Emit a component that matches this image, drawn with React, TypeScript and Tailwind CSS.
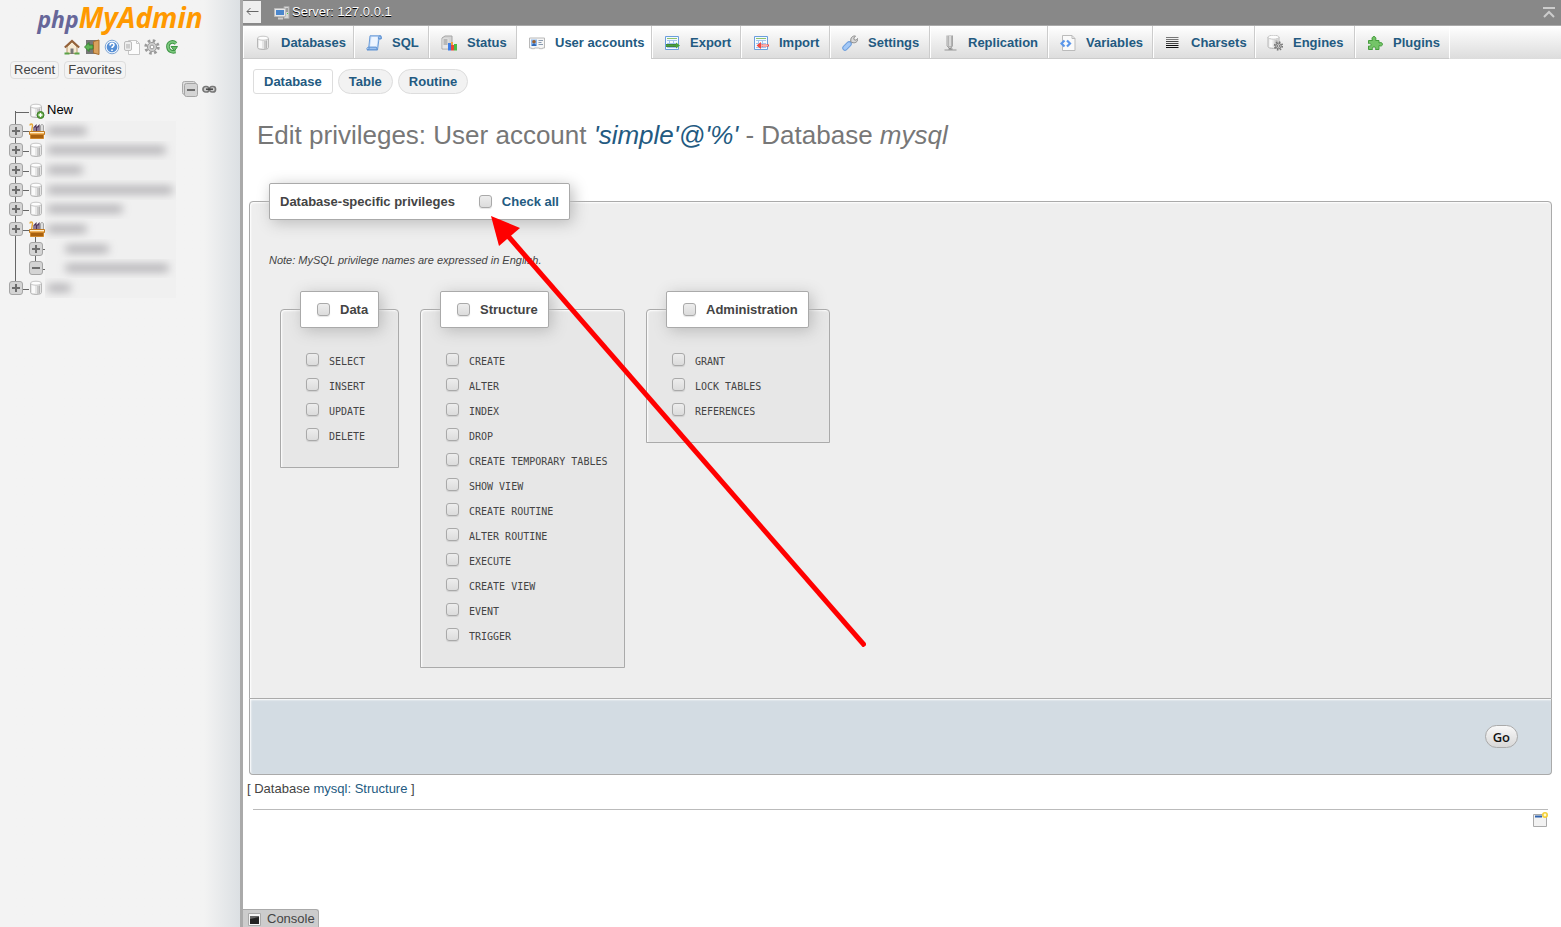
import type { ReactNode } from "react";

function Icon({ children, className = "" }: { children: ReactNode; className?: string }) {
  return (
    <svg aria-hidden="true" viewBox="0 0 16 16" className={`h-4 w-4 shrink-0 ${className}`}>
      {children}
    </svg>
  );
}

function Cylinder() {
  return (
    <>
      <path d="M2.500 3v9.500c0 1.300 2.400 2 5.500 2s5.500-.7 5.500-2V3z" fill="#e6e6e6" />
      <path d="M4 5v8h3V5z" fill="#fafafa" />
      <path d="M9 6v8h2.500V6z" fill="#c9c9c9" />
      <path d="M11.500 5.500v8" stroke="#b4b4b4" />
      <path d="M2.500 3v9.500c0 1.300 2.400 2 5.500 2s5.500-.7 5.500-2V3" fill="none" stroke="#b8b8b8" />
      <ellipse cx="8" cy="3.200" rx="5.500" ry="2" fill="#fdfdfd" stroke="#c6c6c6" />
    </>
  );
}

function Gear({ x, y, r, color }: { x: number; y: number; r: number; color: string }) {
  return (
    <g fill="none" stroke={color}>
      <circle cx={x} cy={y} r={r} strokeWidth={r * 0.45} strokeDasharray={`${r * 0.4} ${r * 0.385}`} />
      <circle cx={x} cy={y} r={r * 0.72} fill="#cfcfcf" strokeWidth="1" />
      <circle cx={x} cy={y} r={r * 0.3} fill="#fff" strokeWidth="1" />
    </g>
  );
}

const DbIcon = () => <Icon><Cylinder /></Icon>;

const SqlIcon = () => (
  <Icon>
    <path d="M4 .8h11l.3 3H13l-1.500 11H1.200c-1-1.500 0-2.500 1.600-2.700z" fill="#c3dbf8" stroke="#6a9bd8" />
    <path d="M5.500 2H12l-1.500 10H4z" fill="#eef5ff" />
    <path d="M12.500 3.800c-.5-1.800.5-3 1.500-2.800s1.500 1.500 1 2.800zM1.200 14.800c2 0 2-1.500 1.600-2.700h7.500c.5 1 .3 2 1.200 2.700z" fill="#9dc2f0" stroke="#5b8fd0" />
  </Icon>
);

const StatusIcon = () => (
  <Icon>
    <path d="M1 3l3-2h7v11l-2.500 2H1z" fill="#d4d4d4" stroke="#a5a5a5" />
    <path d="M1.500 3.500h6v10h-6z" fill="#e6e6e6" />
    <path d="M2.500 5h4M2.500 7h4M2.500 9h4" stroke="#8a8a8a" />
    <path d="M7 8h3v7.500H7z" fill="#3f7fe6" />
    <path d="M10 10h3v5.500h-3z" fill="#e84637" />
    <path d="M10 7h2v3h-2z" fill="#f5a13b" />
    <path d="M13 9h3v6.500h-3z" fill="#4cb944" />
  </Icon>
);

const UsersIcon = () => (
  <Icon>
    <path d="M.5 3h15v10h-2v.7h-3V13h-5v.7h-3V13h-2z" fill="#f6f6f6" stroke="#b9b9b9" />
    <path d="M2 4.500h6v6.500H2z" fill="#8bb8ef" />
    <circle cx="5" cy="6.700" r="1.800" fill="#9a5f2e" />
    <path d="M2.800 11c0-3.400 4.400-3.400 4.400 0z" fill="#2f67b5" />
    <path d="M9.500 5.500H14M9.500 7.500h3M9.500 9.500H14" stroke="#8a9bb0" />
  </Icon>
);

function TableGlyph() {
  return (
    <>
      <path d="M1.500 1.500h13v13h-13z" fill="#f4f9ff" stroke="#6b9fdd" />
      <path d="M3 3.500h10" stroke="#8fc46b" />
      <path d="M3 5.500h10M3 8.500h10M3 12.500h10M5.500 5v7M9.500 5v7" stroke="#a4c4ec" />
    </>
  );
}

const ExportIcon = () => (
  <Icon>
    <TableGlyph />
    <path d="M2 9.500h10V7.500l4 3-4 3v-2H2z" fill="#4aa33c" />
    <path d="M2 11.500h10M2 9.500h10" stroke="#2b7421" strokeWidth=".8" />
  </Icon>
);

const ImportIcon = () => (
  <Icon>
    <TableGlyph />
    <path d="M16 9.500H8V7l-4.500 3.500L8 14v-2.500h8z" fill="#f24b42" />
    <path d="M8 10.500h7" stroke="#ffb0aa" />
  </Icon>
);

const SettingsIcon = () => (
  <Icon>
    <path d="M7 9l3.500-3.500" stroke="#999" strokeWidth="3" />
    <path d="M9 6.500C8 3 10.500.5 13.500 1L11.800 3l.4 1.800 1.800.4L15.800 3.500C16 7 13 8.500 10 7.500z" fill="#d8d8d8" stroke="#8c8c8c" />
    <path d="M3 13l4-4" stroke="#6f9fdd" strokeWidth="5.500" strokeLinecap="round" />
    <path d="M3 13l4-4" stroke="#a3c8f6" strokeWidth="3.500" strokeLinecap="round" />
  </Icon>
);

const ReplicationIcon = () => (
  <Icon>
    <path d="M5 .5v10.500l3 3 2.500-3V.5" fill="#ddd" stroke="#a5a5a5" />
    <path d="M7 .5v12M9 .5v12" stroke="#8a8a8a" />
    <path d="M8 1v10" stroke="#fff" />
    <path d="M2.500 15h12" stroke="#b0b0b0" strokeWidth="1.500" />
    <path d="M6.500 14h4" stroke="#777" />
  </Icon>
);

const VariablesIcon = () => (
  <Icon>
    <path d="M2.500.5h9.500l3 3v12h-12.500z" fill="#fafafa" stroke="#bbb" />
    <path d="M12 .5v3h3" fill="none" stroke="#bbb" />
    <path d="M4.500 5.500L1.500 8.500l3 3M7 5.500l3 3-3 3" fill="none" stroke="#5a96ea" strokeWidth="2.200" />
  </Icon>
);

const CharsetsIcon = () => (
  <Icon>
    <path d="M1 2.500h12.500M1 4.500h12.500" stroke="#777" />
    <path d="M1 6.500h12.500M1 8.500h12.500" stroke="#444" />
    <path d="M1 10.500h12.500M1 12.500h12.500" stroke="#111" />
  </Icon>
);

const EnginesIcon = () => (
  <Icon>
    <g transform="translate(-1.500 -1)"><Cylinder /></g>
    <Gear x={11.5} y={11} r={3.8} color="#777" />
  </Icon>
);

const PluginsIcon = () => (
  <Icon>
    <path d="M1.500 5.500h4c-1.300-2 0-4 1.500-4s2.600 2 1.500 4H12v2.500c1.500-1 3.500-.3 3.500 1.300s-2 2.200-3.500 1.200v4H8.500c.6-2-.2-2.500-1.500-2.500s-2.100.5-1.500 2.500h-4V11c2 .4 2.500-.3 2.500-1.300S3.500 8.100 1.500 8.500z" fill="#74c468" stroke="#459c3c" />
  </Icon>
);

const tabs = [
  { label: "Databases", icon: <DbIcon />, width: "w-[111px]" },
  { label: "SQL", icon: <SqlIcon />, width: "w-[75px]" },
  { label: "Status", icon: <StatusIcon />, width: "w-[88px]" },
  { label: "User accounts", icon: <UsersIcon />, width: "w-[135px]", active: true },
  { label: "Export", icon: <ExportIcon />, width: "w-[89px]" },
  { label: "Import", icon: <ImportIcon />, width: "w-[89px]" },
  { label: "Settings", icon: <SettingsIcon />, width: "w-[100px]" },
  { label: "Replication", icon: <ReplicationIcon />, width: "w-[118px]" },
  { label: "Variables", icon: <VariablesIcon />, width: "w-[105px]" },
  { label: "Charsets", icon: <CharsetsIcon />, width: "w-[102px]" },
  { label: "Engines", icon: <EnginesIcon />, width: "w-[100px]" },
  { label: "Plugins", icon: <PluginsIcon />, width: "w-[95px]" },
];

const boxClass =
  "h-[13px] w-[13px] shrink-0 appearance-none rounded-[3px] border border-[#a9a9a9] bg-linear-to-b from-[#ededed] to-[#dcdcdc] shadow-[0_1px_1px_rgba(0,0,0,0.1)] checked:bg-[#235a81] checked:bg-none";

const legendClass =
  "flex h-[37px] items-center rounded-[2px] border border-[#aaa] bg-white font-bold text-[#444] shadow-[3px_3px_15px_#bbb]";

function PrivilegeGroup({ title, items, width }: { title: string; items: string[]; width: string }) {
  return (
    <fieldset className={`${width} min-w-0 rounded-t-[4px] border border-[#aaa] bg-[#e7e7e7] px-[19px] pb-3.5 shadow-[inset_1px_1px_2px_#fff]`}>
      <legend className={`${legendClass} pr-2.5 pl-4`}>
        <label className="flex items-center gap-2.5">
          <input type="checkbox" className={boxClass} />
          {title}
        </label>
      </legend>
      <ul className="pt-[25px]">
        {items.map((item) => (
          <li key={item} className="h-[25px] pl-1.5">
            <label className="flex items-start gap-2.5 font-['DejaVu_Sans_Mono',monospace] text-[10px] leading-4 whitespace-nowrap text-[#444]">
              <input type="checkbox" className={boxClass} />
              <span className="pt-px">{item}</span>
            </label>
          </li>
        ))}
      </ul>
    </fieldset>
  );
}

function Toggle({ open = false, label }: { open?: boolean; label: string }) {
  return (
    <button type="button" aria-label={label} className="relative h-3.5 w-3.5 shrink-0">
      <svg aria-hidden="true" viewBox="0 0 14 14" className="h-3.5 w-3.5">
        <rect x=".5" y=".5" width="13" height="13" rx="2.500" fill="#d4d4d4" stroke="#a5a5a5" />
        <path d={open ? "M3 7h8" : "M3 7h8M7 3v8"} stroke="#6e6e6e" strokeWidth="2" />
      </svg>
    </button>
  );
}

const GroupIcon = () => (
  <Icon>
    <path d="M1 2.500C1 .5 3.500.5 3.500 2.500L2.500 9" fill="none" stroke="#e5a63a" strokeWidth="1.500" />
    <path d="M5 9.500V4.500l2-2V9M8 9V4.500l2-2V9" fill="#e9dff0" stroke="#4d3358" strokeWidth="1.200" />
    <path d="M11.500 9V3c0-2 3-2 3 0v6" fill="#ddd" stroke="#a5a5a5" />
    <path d="M.5 8.500h15v3h-15z" fill="#f2b45c" stroke="#c07a22" />
    <path d="M1.500 11.500h13v4h-13z" fill="#a9610f" stroke="#d0882c" />
    <path d="M1 9.500h14" stroke="#fff0cf" />
  </Icon>
);

const tree = [
  { kind: "group", bar: "w-10" },
  { kind: "db", bar: "w-[119px]" },
  { kind: "db", bar: "w-9" },
  { kind: "db", bar: "w-[126px]" },
  { kind: "db", bar: "w-[76px]" },
  { kind: "group", bar: "w-10" },
  { kind: "child", bar: "w-11" },
  { kind: "open", bar: "w-[104px]" },
  { kind: "db", bar: "w-6" },
];

function Sidebar() {
  const navButton =
    "h-[18px] rounded-[4px] border border-[#ddd] px-[3px] text-[13px] leading-4 text-[#444]";
  return (
    <aside className="flex w-[243px] shrink-0 flex-col border-r-[3px] border-[#aaa] bg-linear-to-r from-[#f3f3f3] from-85% to-[#dce0e3]">
      <a href="#home" className="flex h-[37px] items-baseline justify-center font-['Open_Sans',sans-serif] text-[28px] leading-[35px] font-bold text-[#f90] italic">
        <span className="text-[23px] text-[#669]">php</span>MyAdmin
      </a>
      <nav className="mt-0.5 flex gap-1 pl-16">
        <a href="#home" aria-label="Home">
          <Icon>
            <path d="M3 8l5-5 5 5v6.500H3z" fill="#f6ead4" stroke="#b89a6c" />
            <path d="M.8 8.500L8 1.800l7.200 6.700" fill="none" stroke="#94613a" strokeWidth="2" />
            <path d="M6.500 9.500h3v5.500h-3z" fill="#777" />
            <path d="M.5 14.500h5M10.500 14.500h5" stroke="#5ba247" strokeWidth="2" />
          </Icon>
        </a>
        <a href="#logout" aria-label="Log out">
          <Icon>
            <path d="M2 1h12v14H2z" fill="#777" />
            <path d="M9.500 2.500L15 1v14.500l-5.500-1.500z" fill="#d9a15d" stroke="#a66f31" />
            <path d="M9 6H5V3.500L.5 8 5 12.500V10h4z" fill="#5fb457" stroke="#2e7d2a" strokeWidth=".8" />
          </Icon>
        </a>
        <a href="#docs" aria-label="Documentation">
          <Icon>
            <circle cx="8" cy="8" r="6.800" fill="#f2f7fd" stroke="#7ea5d5" />
            <circle cx="8" cy="8" r="5.300" fill="#568fd6" />
            <path d="M6 6.500c0-3 4-3 4-.5 0 1.500-2 1.500-2 3M8 10.500V12" fill="none" stroke="#fff" strokeWidth="1.600" />
          </Icon>
        </a>
        <a href="#manual" aria-label="Manual">
          <Icon>
            <path d="M4.500 1.500h8l3 3v11h-11z" fill="#fcfcfc" stroke="#c6c6c6" />
            <path d="M12.500 1.500v3h3" fill="none" stroke="#c6c6c6" />
            <rect x=".5" y="2.500" width="7" height="9" rx="1.500" fill="#eee" stroke="#bbb" />
            <path d="M3 5v4.500M5 5v4.500" stroke="#aaa" />
          </Icon>
        </a>
        <a href="#settings" aria-label="Panel settings"><Icon><Gear x={8} y={8} r={6.3} color="#999" /></Icon></a>
        <a href="#reload" aria-label="Reload">
          <Icon>
            <path d="M12 4.500C8.500 1 3.500 3.500 4 8.200c.5 4 4 5.300 7.500 4.300" fill="none" stroke="#3d9444" strokeWidth="3.600" />
            <path d="M12 4.500C8.500 1 3.500 3.500 4 8.200c.5 4 4 5.300 7.500 4.300" fill="none" stroke="#7bc77d" strokeWidth="1.800" />
            <path d="M7 7.500h6.500L10.500 12z" fill="#6aba6a" stroke="#3d9444" />
          </Icon>
        </a>
      </nav>
      <div className="mt-1.5 flex gap-[5px] pl-2.5">
        <button type="button" className={navButton}>Recent</button>
        <button type="button" className={navButton}>Favorites</button>
      </div>
      <div className="mt-0.5 flex items-center gap-1 pl-[182px]">
        <button type="button" aria-label="Collapse all" className="h-4 w-4">
          <Icon>
            <rect x=".5" y=".5" width="13" height="13" rx="2" fill="#ddd" stroke="#aaa" />
            <rect x="2.500" y="2.500" width="13" height="13" rx="2" fill="#d4d4d4" stroke="#a5a5a5" />
            <path d="M5 9h8" stroke="#6e6e6e" strokeWidth="2" />
          </Icon>
        </button>
        <button type="button" aria-label="Unlink from main panel" className="h-4 w-4">
          <Icon>
            <rect x="1" y="5.500" width="6" height="5.500" rx="2.500" fill="#ccc" stroke="#777" strokeWidth="1.700" />
            <rect x="7.500" y="5.500" width="6" height="5.500" rx="2.500" fill="#ccc" stroke="#777" strokeWidth="1.700" />
            <path d="M4 8.200h7" stroke="#444" strokeWidth="1.500" />
          </Icon>
        </button>
      </div>
      <div className="relative mt-1">
        <div className="absolute top-2.5 left-[15px] h-[176px] w-px bg-[#666]" />
        <div className="absolute top-[132px] left-[35px] h-9 w-px bg-[#666]" />
        <a href="#new" className="flex h-5 items-center pl-[15px] text-[13px] text-black">
          <span className="mt-0.5 h-px w-3.5 bg-[#666]" />
          <Icon>
            <g transform="translate(-1 0)"><Cylinder /></g>
            <circle cx="11.500" cy="12" r="3.500" fill="#5da63f" stroke="#3f7d2a" />
            <path d="M9.500 12h4M11.500 10v4" stroke="#fff" strokeWidth="1.400" />
          </Icon>
          <span className="pb-0.5 pl-0.5">New</span>
        </a>
        <ul className="relative grid h-[177px] auto-rows-fr">
          {tree.map((node, i) => {
            const nested = node.kind === "child" || node.kind === "open";
            return (
              <li key={i} className={`flex items-center ${nested ? "pl-[29px]" : "pl-[9px]"}`}>
                <Toggle open={node.kind === "open"} label={node.kind === "open" ? "Collapse" : "Expand"} />
                <span className={`mt-0.5 h-px bg-[#666] ${nested ? "w-0.5" : "w-1.5"}`} />
                {!nested && <span className="flex w-4">{node.kind === "group" ? <GroupIcon /> : <Icon className="-ml-px"><Cylinder /></Icon>}</span>}
                <span className="flex h-full w-[131px] items-center overflow-hidden bg-[#f0f0f0]">
                  <span className={`${node.bar} ${nested ? "ml-5" : "ml-0.5"} h-2 rounded bg-[#98969b] opacity-70 blur-[4px]`} />
                </span>
              </li>
            );
          })}
        </ul>
      </div>
    </aside>
  );
}

export default function App() {
  const pill = "flex h-[25px] items-center border border-[#ddd] px-2.5";
  return (
    <div className="relative flex min-h-screen bg-white font-['Liberation_Sans',Arial,sans-serif] text-[13px] text-[#444]">
      <Sidebar />
      <main className="flex min-w-0 flex-1 flex-col">
        <header className="flex h-[25px] items-center bg-[#888] text-white">
          <button type="button" aria-label="Hide panel" className="mb-0.5 flex h-[22px] w-[18px] items-center justify-center bg-[#eee]">
            <svg aria-hidden="true" viewBox="0 0 13 9" className="h-[9px] w-[13px]"><path d="M12.500 4.500H1M4.500 1L1 4.500 4.500 8" fill="none" stroke="#666" /></svg>
          </button>
          <a href="#server" className="flex items-center gap-0.5 pb-0.5 pl-[13px] [text-shadow:0_1px_0_#000]">
            <Icon className="mt-0.5">
              <path d="M10 1.500h5v12h-5z" fill="#d5d5d5" stroke="#aaa" />
              <path d="M11 4h3M11 6h3" stroke="#666" />
              <path d="M13 8h1v1h-1z" fill="#4c4" />
              <path d="M.5 3.500h11v8H.5z" fill="#e7e7e7" stroke="#bbb" />
              <path d="M2 5h8v5H2z" fill="#4a86cc" />
              <path d="M4 13.500h5" stroke="#ccc" strokeWidth="2" />
            </Icon>
            Server: 127.0.0.1
          </a>
          <a href="#top" aria-label="Scroll to top" className="mr-1.5 ml-auto">
            <svg aria-hidden="true" viewBox="0 0 12 11" className="h-[11px] w-3"><path d="M0 1h12M1 10l5-5 5 5" fill="none" stroke="#ccc" strokeWidth="2" /></svg>
          </a>
        </header>
        <nav className="flex h-[34px] border-t border-[#aaa] bg-linear-to-b from-white to-[#dcdcdc] font-bold text-[#235a81]">
          {tabs.map((tab) => (
            <a
              key={tab.label}
              href={`#${tab.label}`}
              className={`${tab.width} flex shrink-0 items-center gap-2.5 border-r pl-3 whitespace-nowrap ${
                tab.active ? "border-[#ccc] bg-white" : "border-b border-r-[#ccc] border-b-[#ccc] pt-px shadow-[inset_1px_0_0_#fff] last:border-r-white"
              }`}
            >
              {tab.icon}
              {tab.label}
            </a>
          ))}
        </nav>
        <nav className="flex gap-[5px] px-2.5 pt-2.5 font-bold text-[#235a81]">
          <a href="#database" className={`${pill} rounded-[3px] bg-white`}>Database</a>
          <a href="#table" className={`${pill} rounded-full bg-[#f2f2f2]`}>Table</a>
          <a href="#routine" className={`${pill} rounded-full bg-[#f2f2f2]`}>Routine</a>
        </nav>
        <h2 className="px-3.5 pt-[25px] text-[26px] leading-8 text-[#777]">
          Edit privileges: User account <a href="#user" className="text-[#235a81] italic">'simple'@'%'</a> - Database <i>mysql</i>
        </h2>
        <form className="mt-8 mr-[9px] ml-1.5" onSubmit={(e) => e.preventDefault()}>
          <fieldset className="min-w-0 rounded-t-[4px] border border-[#aaa] bg-[#eee] px-[19px] pb-[30px] shadow-[inset_1px_1px_2px_#fff]">
            <legend className={`${legendClass} px-2.5`}>
              Database-specific privileges
              <label className="ml-6 flex items-center gap-2.5 text-[#235a81]">
                <input type="checkbox" className={boxClass} />
                Check all
              </label>
            </legend>
            <p className="pt-8 text-[11px] leading-4 italic">Note: MySQL privilege names are expressed in English.</p>
            <div className="flex items-start gap-[21px] pt-[23px] pl-[11px]">
              <PrivilegeGroup title="Data" width="w-[119px]" items={["SELECT", "INSERT", "UPDATE", "DELETE"]} />
              <PrivilegeGroup
                title="Structure"
                width="w-[205px]"
                items={["CREATE", "ALTER", "INDEX", "DROP", "CREATE TEMPORARY TABLES", "SHOW VIEW", "CREATE ROUTINE", "ALTER ROUTINE", "EXECUTE", "CREATE VIEW", "EVENT", "TRIGGER"]}
              />
              <PrivilegeGroup title="Administration" width="w-[184px]" items={["GRANT", "LOCK TABLES", "REFERENCES"]} />
            </div>
          </fieldset>
          <div className="flex h-[76px] items-center justify-end rounded-b-[4px] border border-t-0 border-[#aaa] bg-[#d3dce3] pr-[33px] shadow-[inset_1px_1px_2px_#fff]">
            <button type="submit" className="h-[23px] rounded-full border border-[#aaa] bg-linear-to-b from-[#f8f8f8] to-[#d8d8d8] px-[7px] font-['Open_Sans',sans-serif] text-[13px] leading-5 font-semibold text-[#111]">
              Go
            </button>
          </div>
        </form>
        <p className="px-1 pt-1 leading-5">
          [ Database <a href="#mysql" className="text-[#235a81]">mysql:</a> <a href="#structure" className="text-[#235a81]">Structure</a> ]
        </p>
        <hr className="mt-2.5 mr-[13px] ml-2.5 border-[#bbb]" />
        <a href="#window" aria-label="Open new window" className="mt-0.5 mr-[13px] self-end">
          <Icon>
            <path d="M1.500 2.500h13v12h-13z" fill="#f2f2f2" stroke="#aaa" />
            <path d="M3 4.500h7" stroke="#2f62ad" strokeWidth="2" />
            <circle cx="13" cy="3" r="2.200" fill="#fffbd0" stroke="#f5cf35" strokeWidth="1.600" />
          </Icon>
        </a>
        <button type="button" className="mt-auto flex h-[18px] items-center gap-1 self-start rounded-tr-[3px] border-t border-r border-[#aaa] bg-[#ccc] pr-[3px] pl-1">
          <Icon>
            <path d="M1.500 2.500h12v12h-12z" fill="#f5f5f5" stroke="#aaa" />
            <path d="M3 5h9v8H3z" fill="#222" />
            <path d="M3 5h9v1L3 8z" fill="#666" />
          </Icon>
          Console
        </button>
      </main>
      <svg aria-hidden="true" viewBox="0 0 376 432" className="pointer-events-none absolute top-[215px] left-[490px] h-[432px] w-[376px]">
        <path d="M375 431L18 21" stroke="#f00" strokeWidth="5" />
        <path d="M1 1l29 12L9 31z" fill="#f00" />
      </svg>
    </div>
  );
}
